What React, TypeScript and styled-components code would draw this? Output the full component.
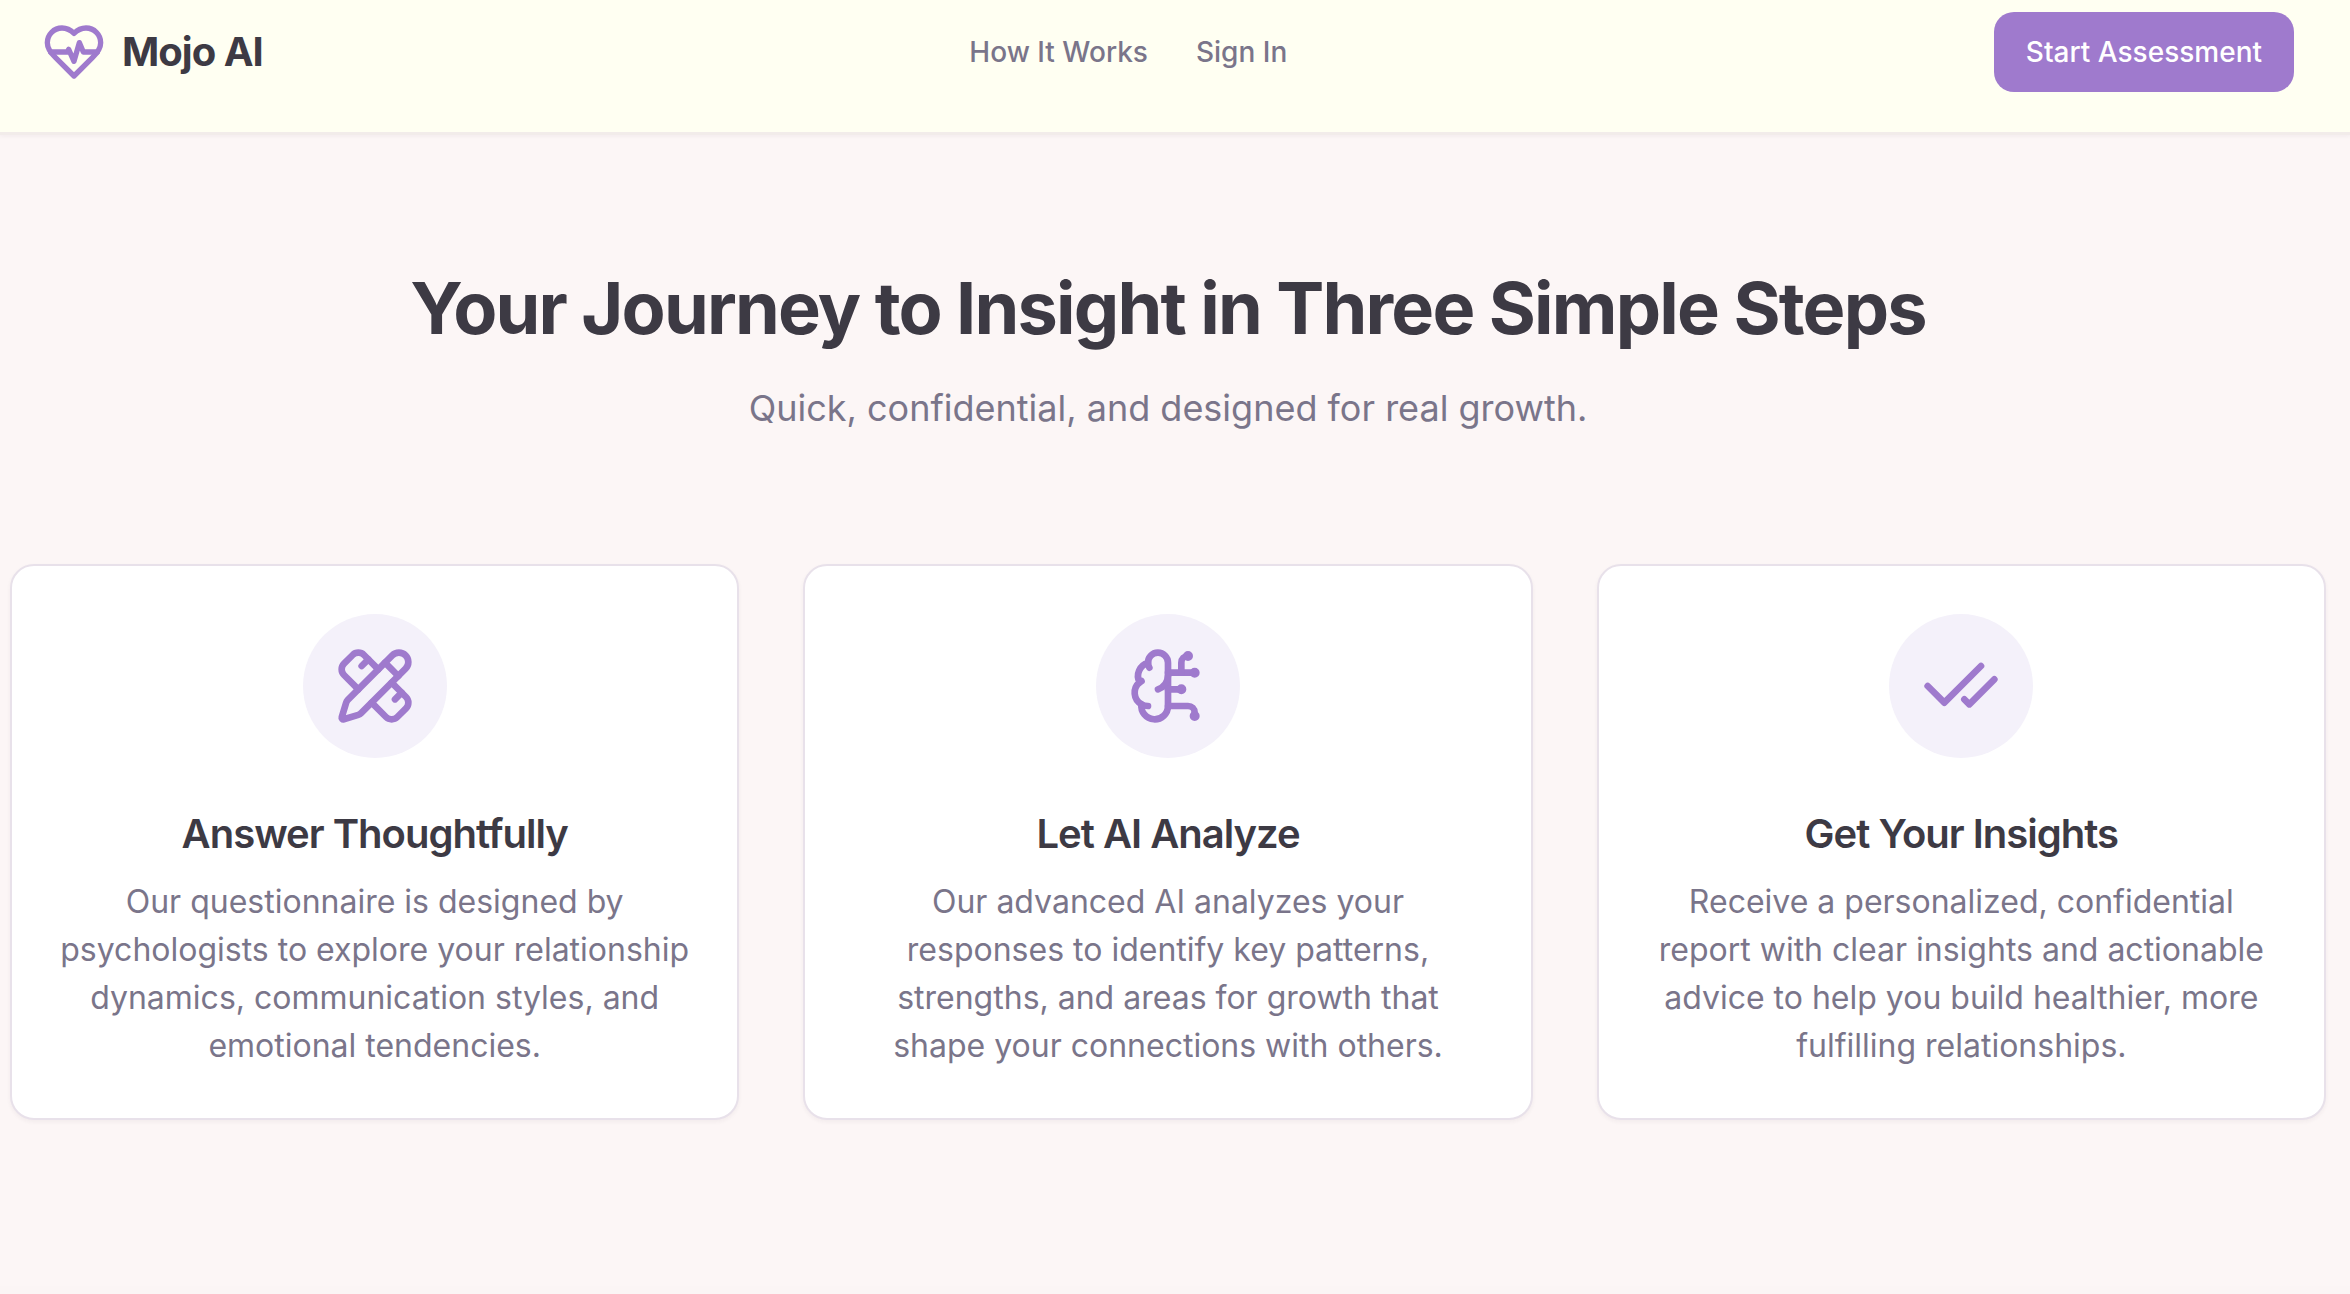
import React from 'react';
import styled, { createGlobalStyle } from 'styled-components';
import { BrainCircuit, CheckCheck, PencilRuler } from 'lucide-react';
import type { LucideIcon } from 'lucide-react';

const color = {
  ink: '#3d3a44',
  muted: '#7a758a',
  accent: '#9f7acd',
  tint: '#f4f1fa',
  line: '#e8e1ea',
  cream: '#fffff2',
  blush: '#fcf6f6',
};

const headingTracking = '-0.025em';

const GlobalStyle = createGlobalStyle`
  *, *::before, *::after { box-sizing: border-box; }
  body {
    margin: 0;
    background: #fbf5f5;
    color: ${color.ink};
    font-family: Inter, "Liberation Sans", sans-serif;
    -webkit-font-smoothing: antialiased;
  }
  h1, h2, h3, p { margin: 0; }
`;

const Header = styled.header`
  position: relative;
  display: flex;
  align-items: center;
  justify-content: space-between;
  padding: 12px 56px 40px 42px;
  background: ${color.cream};
  box-shadow: 0 3px 0 #f2ecea, 0 4px 4px rgba(60, 40, 60, 0.06);
`;

const Brand = styled.a`
  display: flex;
  align-items: center;
  gap: 16px;
  color: ${color.ink};
  font-size: 40px;
  line-height: 56px;
  font-weight: 700;
  letter-spacing: ${headingTracking};
  text-decoration: none;

  svg { color: ${color.accent}; }
`;

const Nav = styled.nav`
  display: flex;
  gap: 48px;
`;

const NavLink = styled.a`
  color: ${color.muted};
  font-size: 28px;
  line-height: 40px;
  font-weight: 500;
  text-decoration: none;
`;

const StartButton = styled.button`
  height: 80px;
  padding: 0 32px;
  border: 0;
  border-radius: 20px;
  background: ${color.accent};
  color: #ffffff;
  font: 500 28px/40px Inter, "Liberation Sans", sans-serif;
  cursor: pointer;
`;

const Steps = styled.section`
  padding: 136px 24px 166px 10px;
  background: ${color.blush};
`;

const Intro = styled.div`
  display: flex;
  flex-direction: column;
  gap: 32px;
  margin-bottom: 128px;
  text-align: center;
`;

const Title = styled.h2`
  font-size: 72px;
  line-height: 80px;
  font-weight: 700;
  letter-spacing: ${headingTracking};
`;

const Subtitle = styled.p`
  color: ${color.muted};
  font-size: 36px;
  line-height: 56px;
`;

const CardGrid = styled.div`
  display: grid;
  grid-template-columns: repeat(3, minmax(0, 1fr));
  gap: 64px;
`;

const Card = styled.article`
  display: flex;
  flex-direction: column;
  align-items: center;
  padding: 48px;
  border: 2px solid ${color.line};
  border-radius: 24px;
  background: #ffffff;
  box-shadow: 0 2px 4px rgba(60, 40, 60, 0.05);
  text-align: center;
`;

const IconDisc = styled.div`
  display: grid;
  place-items: center;
  width: 144px;
  height: 144px;
  margin-bottom: 48px;
  border-radius: 50%;
  background: ${color.tint};
  color: ${color.accent};
`;

const CardTitle = styled.h3`
  margin-bottom: 16px;
  font-size: 40px;
  line-height: 56px;
  font-weight: 600;
  letter-spacing: ${headingTracking};
`;

const CardText = styled.p`
  color: ${color.muted};
  font-size: 32px;
  line-height: 48px;
`;

function HeartLogo() {
  return (
    <svg
      width="64"
      height="64"
      viewBox="0 0 24 24"
      fill="none"
      stroke="currentColor"
      strokeWidth="2"
      strokeLinecap="round"
      strokeLinejoin="round"
      aria-hidden="true"
    >
      <path d="M19 14c1.49-1.46 3-3.21 3-5.5A5.5 5.5 0 0 0 16.5 3c-1.76 0-3 .5-4.5 2-1.5-1.5-2.74-2-4.5-2A5.5 5.5 0 0 0 2 8.5c0 2.3 1.5 4.05 3 5.5l7 7Z" />
      <path d="M3.22 12H9.5l.5-1 2 4.5 2-7 1.5 3.5h5.27" />
    </svg>
  );
}

type Step = { icon: LucideIcon; title: string; text: string };

const steps: Step[] = [
  {
    icon: PencilRuler,
    title: 'Answer Thoughtfully',
    text: 'Our questionnaire is designed by psychologists to explore your relationship dynamics, communication styles, and emotional tendencies.',
  },
  {
    icon: BrainCircuit,
    title: 'Let AI Analyze',
    text: 'Our advanced AI analyzes your responses to identify key patterns, strengths, and areas for growth that shape your connections with others.',
  },
  {
    icon: CheckCheck,
    title: 'Get Your Insights',
    text: 'Receive a personalized, confidential report with clear insights and actionable advice to help you build healthier, more fulfilling relationships.',
  },
];

export default function App() {
  return (
    <>
      <GlobalStyle />
      <Header>
        <Brand href="#">
          <HeartLogo />
          Mojo AI
        </Brand>
        <Nav aria-label="Main">
          <NavLink href="#how-it-works">How It Works</NavLink>
          <NavLink href="#sign-in">Sign In</NavLink>
        </Nav>
        <StartButton type="button">Start Assessment</StartButton>
      </Header>
      <main>
        <Steps id="how-it-works">
          <Intro>
            <Title>Your Journey to Insight in Three Simple Steps</Title>
            <Subtitle>Quick, confidential, and designed for real growth.</Subtitle>
          </Intro>
          <CardGrid>
            {steps.map(({ icon: Icon, title, text }) => (
              <Card key={title}>
                <IconDisc>
                  <Icon size={80} aria-hidden="true" />
                </IconDisc>
                <CardTitle>{title}</CardTitle>
                <CardText>{text}</CardText>
              </Card>
            ))}
          </CardGrid>
        </Steps>
      </main>
    </>
  );
}
